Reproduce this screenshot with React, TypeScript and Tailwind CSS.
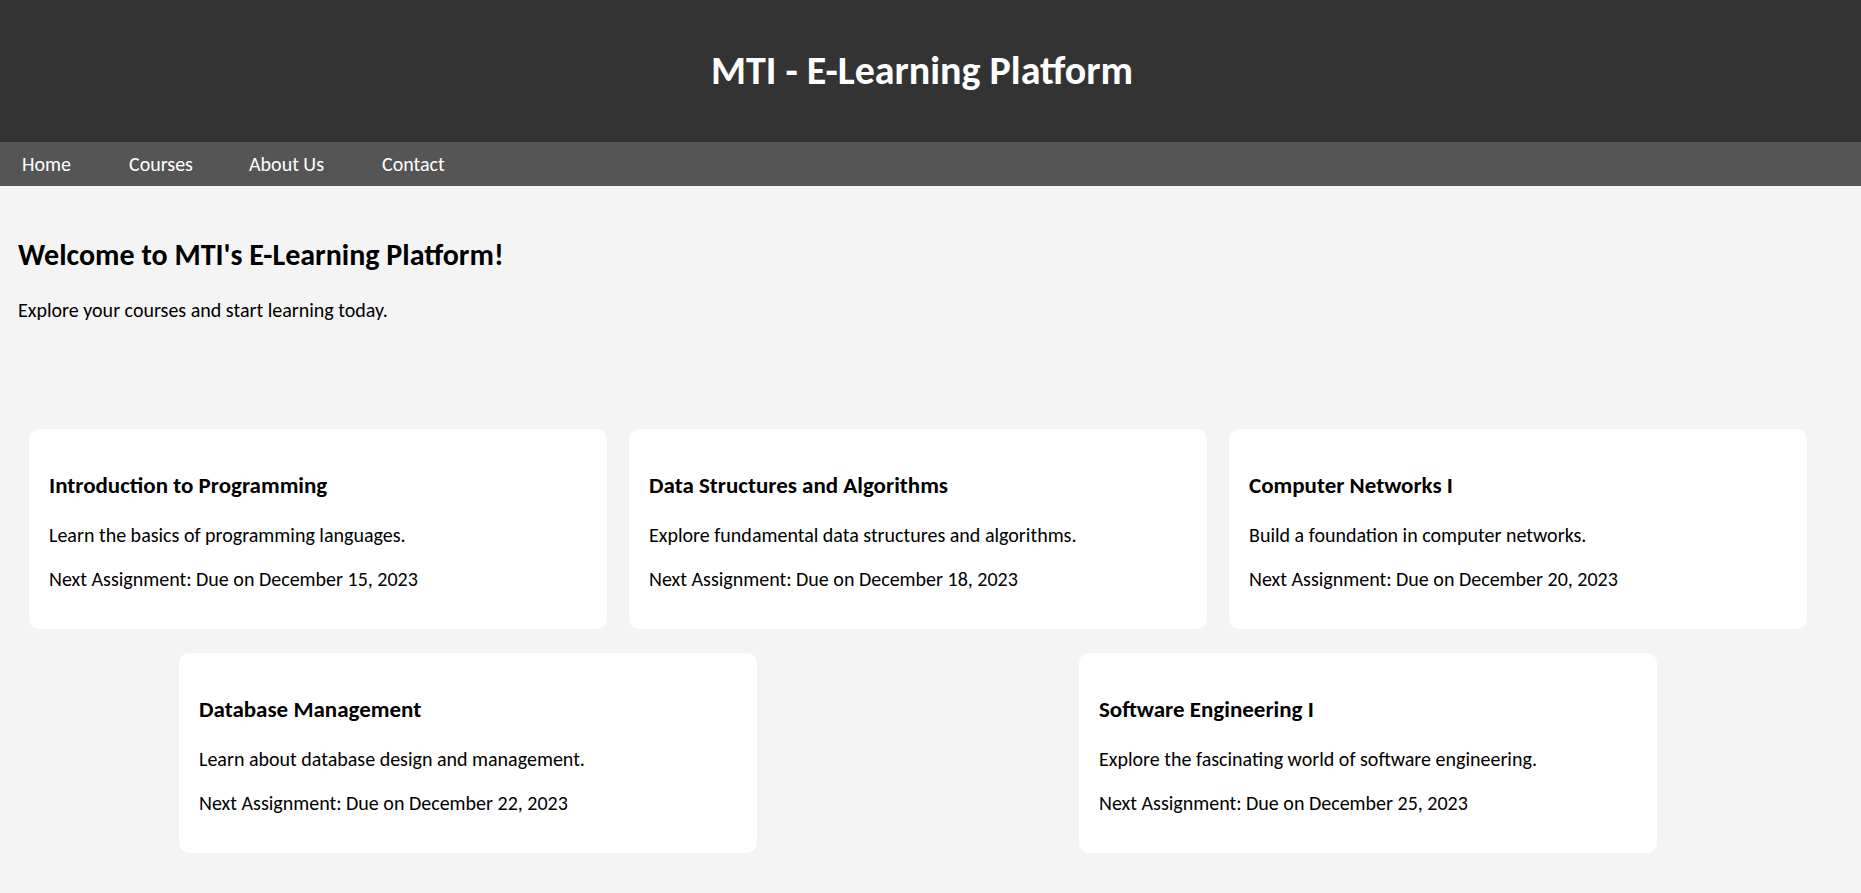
const courses = [
  {
    title: "Introduction to Programming",
    desc: "Learn the basics of programming languages.",
    due: "December 15, 2023",
  },
  {
    title: "Data Structures and Algorithms",
    desc: "Explore fundamental data structures and algorithms.",
    due: "December 18, 2023",
  },
  {
    title: "Computer Networks I",
    desc: "Build a foundation in computer networks.",
    due: "December 20, 2023",
  },
  {
    title: "Database Management",
    desc: "Learn about database design and management.",
    due: "December 22, 2023",
  },
  {
    title: "Software Engineering I",
    desc: "Explore the fascinating world of software engineering.",
    due: "December 25, 2023",
  },
];

const links = [
  { label: "Home", w: "w-[107px]" },
  { label: "Courses", w: "w-[120px]" },
  { label: "About Us", w: "w-[133px]" },
  { label: "Contact", w: "w-[120px]" },
];

function CourseCard({ title, desc, due }: { title: string; desc: string; due: string }) {
  return (
    <div className="mx-[11px] my-[12px] h-[200px] w-[578px] rounded-[10px] bg-white px-[20px] pt-[42px]">
      <h3 className="text-[23px] leading-[28px] font-bold text-black">{title}</h3>
      <p className="mt-[24px] text-[20px] leading-[24px] text-black">{desc}</p>
      <p className="mt-[20px] text-[20px] leading-[24px] text-black">
        Next Assignment: Due on {due}
      </p>
    </div>
  );
}

export default function App() {
  return (
    <div className="min-h-screen bg-[#f4f4f4] font-['Carlito','Lato',sans-serif] text-black">
      <header className="flex h-[142px] items-center justify-center bg-[#333333] pr-[17px]">
        <h1 className="text-[40px] leading-[48px] font-bold text-white">
          MTI - E-Learning Platform
        </h1>
      </header>
      <nav className="flex h-[44px] items-center bg-[#555555] pl-[22px]">
        {links.map((l) => (
          <a key={l.label} href="#" className={`${l.w} text-[20px] leading-[24px] text-white`}>
            {l.label}
          </a>
        ))}
      </nav>
      <main className="px-[18px] pt-[51px] pb-[50px]">
        <h2 className="text-[30px] leading-[36px] font-bold">Welcome to MTI's E-Learning Platform!</h2>
        <p className="mt-[25px] text-[20px] leading-[24px]">
          Explore your courses and start learning today.
        </p>
        <section className="mt-[95px] flex w-[1800px] flex-wrap justify-around">
          {courses.map((c) => (
            <CourseCard key={c.title} {...c} />
          ))}
        </section>
      </main>
    </div>
  );
}
